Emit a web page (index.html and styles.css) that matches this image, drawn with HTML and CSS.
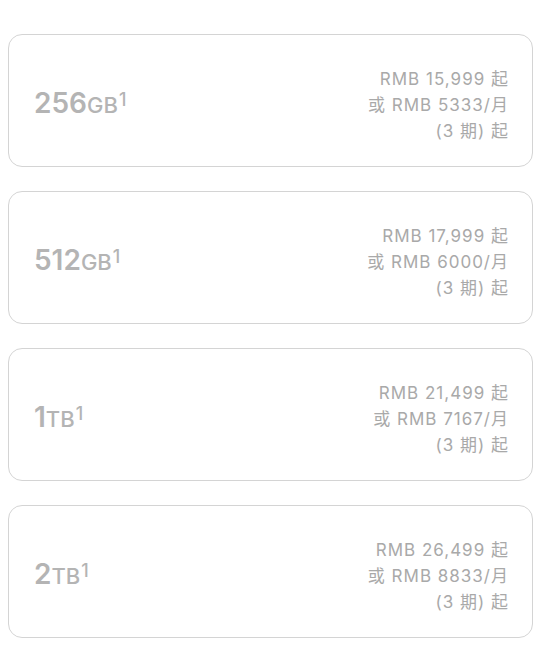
FILE: index.html
```html
<!DOCTYPE html>
<html>
<head>
  <meta charset="utf-8" />
  <title>存储容量</title>
  <link rel="stylesheet" href="styles.css">
</head>
<body>

<div class="options">
  <div class="option">
    <div class="capacity">256<span class="unit">GB</span><span class="note">1</span></div>
    <div class="price">
      <div>RMB 15,999 起</div>
      <div>或 RMB 5333/月</div>
      <div>(3 期) 起</div>
    </div>
  </div>

  <div class="option">
    <div class="capacity">512<span class="unit">GB</span><span class="note">1</span></div>
    <div class="price">
      <div>RMB 17,999 起</div>
      <div>或 RMB 6000/月</div>
      <div>(3 期) 起</div>
    </div>
  </div>

  <div class="option">
    <div class="capacity">1<span class="unit">TB</span><span class="note">1</span></div>
    <div class="price">
      <div>RMB 21,499 起</div>
      <div>或 RMB 7167/月</div>
      <div>(3 期) 起</div>
    </div>
  </div>

  <div class="option">
    <div class="capacity">2<span class="unit">TB</span><span class="note">1</span></div>
    <div class="price">
      <div>RMB 26,499 起</div>
      <div>或 RMB 8833/月</div>
      <div>(3 期) 起</div>
    </div>
  </div>
</div>

</body>
</html>
```

FILE: styles.css
```css
body {
  margin: 0;
  background: #fff;
  font-family: Inter, "Noto Sans CJK SC", sans-serif;
}

.options {
  display: flex;
  flex-direction: column;
  gap: 24px;
  width: 525px;
  padding: 34px 0 0 8px;
}

.option {
  box-sizing: border-box;
  height: 133px;
  display: flex;
  align-items: center;
  justify-content: space-between;
  padding: 0 23px 0 25px;
  border: 1px solid #d4d4d4;
  border-radius: 14px;
}

.capacity {
  margin-top: 3px;
  color: #b4b4b4;
  font-size: 28px;
  font-weight: 600;
  line-height: 34px;
}

.capacity .unit {
  font-size: 22px;
  font-weight: 500;
}

.capacity .note {
  margin-left: 1px;
  font-size: 18px;
  font-weight: 500;
  vertical-align: 7px;
}

.price {
  margin-top: 8px;
  color: #a9a9a9;
  font-size: 17px;
  line-height: 26px;
  letter-spacing: 1px;
  text-align: right;
}
```
